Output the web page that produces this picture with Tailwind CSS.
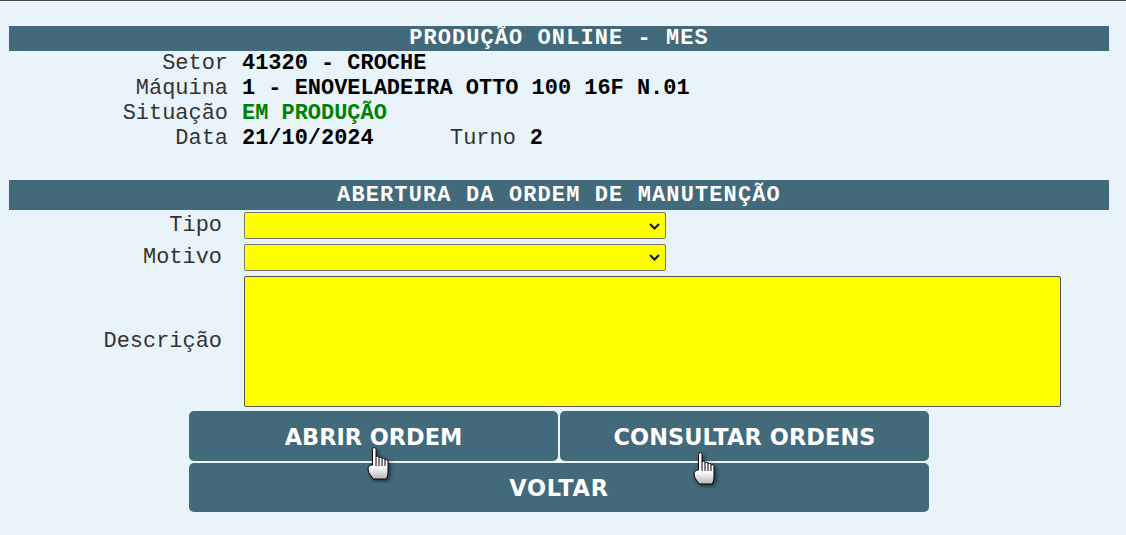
<!DOCTYPE html>
<html lang="pt-BR">
<head>
    <meta charset="UTF-8">
    <title>Produção Online - MES</title>
    <script src="https://cdn.jsdelivr.net/npm/@tailwindcss/browser@4"></script>
</head>
<body class="bg-[#e8f4fa] h-[535px] overflow-hidden font-['Liberation_Mono',monospace] text-[21.95px] leading-[25px] text-[#333]">
    <svg class="absolute w-0 h-0" width="0" height="0">
        <defs>
            <linearGradient id="handFill" x1="0" y1="0" x2="0" y2="1">
                <stop offset="0.6" stop-color="#ffffff"/>
                <stop offset="1" stop-color="#b5b5b5"/>
            </linearGradient>
            <filter id="handShadow" x="-40%" y="-30%" width="190%" height="170%">
                <feDropShadow dx="2" dy="2" stdDeviation="2" flood-color="#000" flood-opacity="0.5"/>
            </filter>
            <symbol id="hand" viewBox="0 0 28 36">
                <path filter="url(#handShadow)" fill="url(#handFill)" stroke="#000" stroke-width="1" stroke-linejoin="round" d="M5.500 2.500c0-2.500 3.500-2.500 3.500 0V10c0-1 3-1 3 0v1c0-1 3-1 3 0v1c0-1 3-1 3 0v1c.5-.5 3-.5 3 1v11c0 3-1 5-1.500 7H6c-1-3-5-5-5-10 0-3 2-4 4.500-4z"/>
                <path stroke="#000" stroke-width="1" fill="none" d="M9 10v9M12 11v8M15 12v7M18 13v6"/>
            </symbol>
        </defs>
    </svg>
    <div class="h-px bg-[#444]"></div>
    <main class="px-[9px] pt-[25px] w-[1118px]">
        <h1 class="h-[25px] bg-[#426a7a] text-white font-bold text-center tracking-[1.1px] leading-[26px]">PRODUÇÃO ONLINE - MES</h1>

        <div class="h-[25px] flex"><span class="w-[219px] text-right">Setor</span><b class="ml-[14px] text-black">41320 - CROCHE</b></div>
        <div class="h-[25px] flex"><span class="w-[219px] text-right">Máquina</span><b class="ml-[14px] text-black">1 - ENOVELADEIRA OTTO 100 16F N.01</b></div>
        <div class="h-[25px] flex"><span class="w-[219px] text-right">Situação</span><b class="ml-[14px] text-[#008000]">EM PRODUÇÃO</b></div>
        <div class="h-[25px] flex">
            <span class="w-[219px] text-right">Data</span><b class="ml-[14px] w-[208px] text-black">21/10/2024</b>
            <span>Turno</span><b class="ml-[14px] text-black">2</b>
        </div>

        <h2 class="mt-[29px] h-[30px] bg-[#426a7a] text-white font-bold text-center tracking-[1.15px] leading-[31px]">ABERTURA DA ORDEM DE MANUTENÇÃO</h2>

        <form class="pt-[2px]">
            <div class="h-[32px] flex items-start">
                <label class="w-[213px] text-right leading-[27px]">Tipo</label>
                <div class="relative ml-[22px] w-[422px] h-[27px]">
                    <select class="appearance-none block w-full h-full bg-[#ffff00] border border-[#767676] rounded-[2px]"><option></option></select>
                    <svg class="absolute left-[405px] top-[11px] pointer-events-none" width="11" height="7" viewBox="0 0 11 7"><path d="M1 1l4.500 4.500L10 1" fill="none" stroke="#111" stroke-width="2"/></svg>
                </div>
            </div>
            <div class="h-[32px] flex items-start">
                <label class="w-[213px] text-right leading-[27px]">Motivo</label>
                <div class="relative ml-[22px] w-[422px] h-[27px]">
                    <select class="appearance-none block w-full h-full bg-[#ffff00] border border-[#767676] rounded-[2px]"><option></option></select>
                    <svg class="absolute left-[405px] top-[10px] pointer-events-none" width="11" height="7" viewBox="0 0 11 7"><path d="M1 1l4.500 4.500L10 1" fill="none" stroke="#111" stroke-width="2"/></svg>
                </div>
            </div>
            <div class="h-[135px] flex items-start">
                <label class="w-[213px] text-right leading-[131px]">Descrição</label>
                <textarea class="ml-[22px] w-[817px] h-[131px] bg-[#ffff00] border border-[#555] rounded-[2px] resize-none block"></textarea>
            </div>
        </form>

        <div class="ml-[180px] w-[740px] grid grid-cols-[369px_369px] gap-[2px] font-['DejaVu_Sans',sans-serif] font-bold text-white text-[22.4px]">
            <button class="relative h-[50px] pt-[2px] bg-[#426a7a] rounded-[5px]">ABRIR ORDEM
                <svg class="absolute z-10 left-[178px] top-[36px]" width="28" height="36" viewBox="0 0 28 36"><use href="#hand"/></svg>
            </button>
            <button class="relative h-[50px] pt-[2px] bg-[#426a7a] rounded-[5px] tracking-[0.13px]">CONSULTAR ORDENS
                <svg class="absolute z-10 left-[133px] top-[41px]" width="28" height="36" viewBox="0 0 28 36"><use href="#hand"/></svg>
            </button>
            <button class="col-span-2 h-[49px] pt-[2px] bg-[#426a7a] rounded-[5px] tracking-[0.8px]">VOLTAR</button>
        </div>
    </main>
</body>
</html>
